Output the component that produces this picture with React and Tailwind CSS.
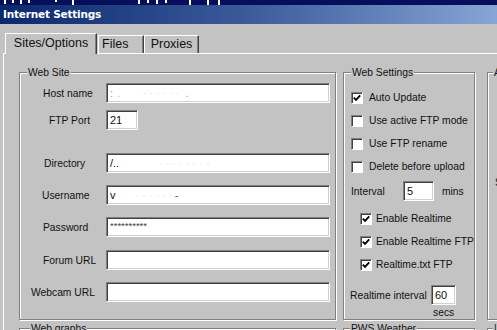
const Field = ({ className = "", children }) => (
  <div
    className={`h-[20px] shrink-0 bg-white border border-t-[#808080] border-l-[#808080] border-b-white border-r-white shadow-[inset_1px_1px_0_#404040,inset_-1px_-1px_0_#d4d0c8] flex items-center pl-[3px] text-[11px] leading-[13px] text-[#111] overflow-hidden whitespace-nowrap ${className}`}
  >
    {children}
  </div>
);

const Check = ({ checked }) => (
  <span className="w-[12px] h-[12px] shrink-0 bg-white border border-t-[#808080] border-l-[#808080] border-b-white border-r-white shadow-[inset_1px_1px_0_#404040] flex items-center justify-center">
    {checked && (
      <svg width="8" height="8" viewBox="0 0 8 8">
        <path d="M0.8 3.6 L3 5.8 L7.2 1.4" stroke="#000" strokeWidth="1.9" fill="none" />
      </svg>
    )}
  </span>
);

const CheckRow = ({ checked, label, gap = "gap-[6px]" }) => (
  <div className={`h-[23px] flex items-center ${gap}`}>
    <Check checked={checked} />
    <span className="whitespace-nowrap">{label}</span>
  </div>
);

const Group = ({ legend, legendMl = "ml-[7px]", className = "", children }) => (
  <div
    className={`shrink-0 border border-[#808080] shadow-[inset_1px_1px_0_#fff,1px_1px_0_#fff] flex flex-col ${className}`}
  >
    <span className={`self-start -mt-[7px] ${legendMl} px-[1px] bg-[#c3c3c3] h-[13px] leading-[13px] whitespace-nowrap`}>
      {legend}
    </span>
    {children}
  </div>
);

const LabelRow = ({ label, pl, mt, children }) => (
  <div className={`flex items-center h-[20px] ${mt}`}>
    <span className={`w-[86px] shrink-0 whitespace-nowrap ${pl}`}>{label}</span>
    {children}
  </div>
);

export default function App() {
  return (
    <div className="w-[497px] h-[330px] overflow-hidden bg-[#c3c3c3] flex flex-col font-['Liberation_Sans',Arial,sans-serif] text-[10.3px] leading-[13px] text-[#111]">
      {/* top strip with cropped fragments */}
      <div className="h-[5px] shrink-0 bg-[#070f5c] flex items-start">
        <div className="ml-[4px] w-[2px] h-[4px] bg-white" />
        <div className="ml-[6px] w-[2px] h-[3px] bg-white" />
        <div className="ml-[6px] w-[2px] h-[4px] bg-white" />
        <div className="ml-[6px] w-[2px] h-[3px] bg-white" />
        <div className="ml-[25px] w-[2px] h-[2px] bg-white" />
        <div className="ml-[15px] w-[2px] h-[5px] bg-white" />
        <div className="ml-[64px] w-[2px] h-[4px] bg-white" />
        <div className="ml-[7px] w-[2px] h-[3px] bg-white" />
        <div className="ml-[7px] w-[2px] h-[4px] bg-white" />
        <div className="ml-[7px] w-[2px] h-[3px] bg-white" />
        <div className="ml-[22px] w-[2px] h-[5px] bg-white" />
        <div className="ml-[16px] w-[2px] h-[5px] bg-white" />
        <div className="ml-[9px] w-[2px] h-[5px] bg-white" />
      </div>

      {/* title bar */}
      <div className="h-[19px] shrink-0 bg-linear-to-r from-[#0b286c] via-[#3b5b9b] to-[#86a6d6] flex items-center pl-[3px]">
        <span className="text-white font-bold text-[10.5px] font-['DejaVu_Sans',Verdana,sans-serif] tracking-[-0.2px]">
          Internet Settings
        </span>
      </div>

      <div className="h-[9px] shrink-0" />

      {/* tabs */}
      <div className="h-[20px] shrink-0 flex items-end pl-[5px] relative z-10 text-[12.5px] leading-[15px]">
        <div className="h-[21px] -mb-[1px] w-[92px] bg-[#c3c3c3] border-l border-t border-white border-r border-r-[#404040] shadow-[inset_-1px_0_0_#808080] flex items-center justify-center pb-[1px]">
          Sites/Options
        </div>
        <div className="h-[18px] ml-[1px] w-[46px] border-l border-t border-white border-r border-r-[#404040] shadow-[inset_-1px_0_0_#808080] flex items-center pl-[3px]">
          Files
        </div>
        <div className="h-[18px] w-[55px] border-l border-t border-white border-r border-r-[#404040] shadow-[inset_-1px_0_0_#808080] flex items-center justify-center">
          Proxies
        </div>
      </div>

      {/* tab page */}
      <div className="flex-1 ml-[3px] border-l border-t border-white pl-[15px] pt-[18px] overflow-hidden">
        <div className="flex items-start">
          <Group legend="Web Site" className="w-[317px] h-[248px]">
            <LabelRow label="Host name" pl="pl-[23px]" mt="mt-[4px]">
              <Field className="w-[224px]">
                <span className="text-[#9a9a9a]">:</span>
                <span className="ml-[4px] text-[#bbb]">.</span>
                <span className="ml-[22px] text-[#e2e2e2]">·  ·  ·   ·  ·  ·</span>
                <span className="ml-[6px] text-[#999]">.</span>
              </Field>
            </LabelRow>
            <LabelRow label="FTP Port" pl="pl-[29px]" mt="mt-[7px]">
              <Field className="w-[32px]">21</Field>
            </LabelRow>
            <LabelRow label="Directory" pl="pl-[24px]" mt="mt-[23px]">
              <Field className="w-[224px]">
                /..
                <span className="ml-[40px] text-[#e4e4e4]">·  ·  ·  ·  ·  ·  ·  ·</span>
              </Field>
            </LabelRow>
            <LabelRow label="Username" pl="pl-[22px]" mt="mt-[12px]">
              <Field className="w-[224px]">
                v
                <span className="ml-[20px] text-[#e2e2e2]">·  ·  ·  ·  ·  ·</span>
                <span className="ml-[2px] text-[#555]">-</span>
              </Field>
            </LabelRow>
            <LabelRow label="Password" pl="pl-[23px]" mt="mt-[12px]">
              <Field className="w-[224px]">
                <span className="text-[9.5px] leading-[9px] pb-[3px] text-[#444]">**********</span>
              </Field>
            </LabelRow>
            <LabelRow label="Forum URL" pl="pl-[23px]" mt="mt-[13px]">
              <Field className="w-[224px]" />
            </LabelRow>
            <LabelRow label="Webcam URL" pl="pl-[11px]" mt="mt-[12px]">
              <Field className="w-[224px]" />
            </LabelRow>
          </Group>

          <Group legend="Web Settings" className="ml-[7px] w-[132px] h-[248px]">
            <div className="flex flex-col pl-[7px] pt-[7px]">
              <CheckRow checked label="Auto Update" />
              <CheckRow label="Use active FTP mode" />
              <CheckRow label="Use FTP rename" />
              <CheckRow label="Delete before upload" />
              <div className="flex items-center h-[22px] mt-[2px]">
                <span className="w-[52px] shrink-0">Interval</span>
                <Field className="w-[31px]">5</Field>
                <span className="ml-[8px]">mins</span>
              </div>
              <div className="flex flex-col pl-[9px] mt-[5px]">
                <CheckRow checked label="Enable Realtime" gap="gap-[4px]" />
                <CheckRow checked label="Enable Realtime FTP" gap="gap-[4px]" />
                <CheckRow checked label="Realtime.txt FTP" gap="gap-[4px]" />
              </div>
              <div className="flex items-center h-[20px] mt-[9px] -ml-[1px]">
                <span className="w-[81px] shrink-0 whitespace-nowrap">Realtime interval</span>
                <Field className="w-[25px]">60</Field>
              </div>
              <span className="ml-[82px] mt-[1px]">secs</span>
            </div>
          </Group>

          <Group legend="A" className="ml-[12px] w-[40px] h-[248px]" legendMl="ml-[5px]">
            <span className="ml-[7px] mt-[97px]">S</span>
          </Group>
        </div>

        <div className="flex items-start mt-[8px]">
          <Group legend="Web graphs" legendMl="ml-[10px]" className="w-[317px] h-[40px]" />
          <Group legend="PWS Weather" legendMl="ml-[6px]" className="ml-[7px] w-[132px] h-[40px]" />
          <Group legend="|" legendMl="ml-[5px]" className="ml-[12px] w-[40px] h-[40px]" />
        </div>
      </div>
    </div>
  );
}
